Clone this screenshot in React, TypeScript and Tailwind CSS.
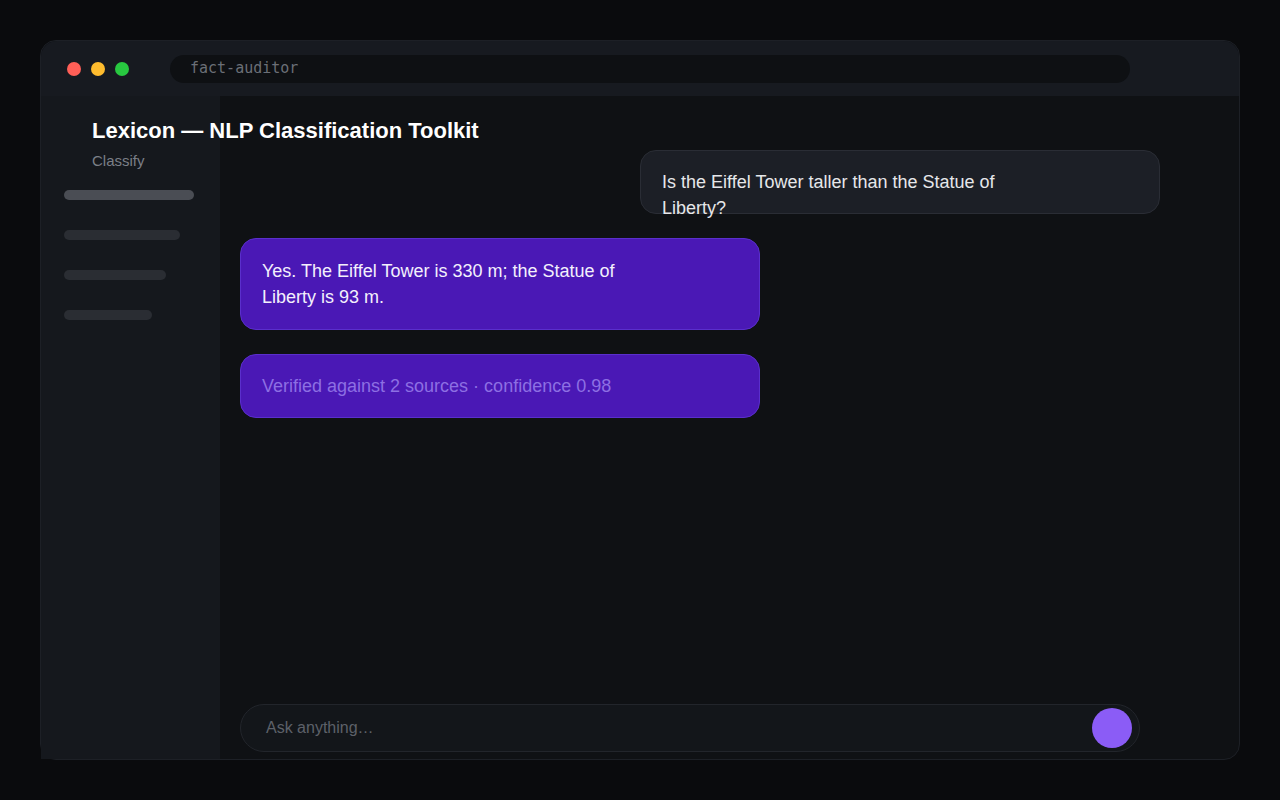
import * as React from "react";

const sans = "font-['Liberation_Sans','Helvetica',Arial,sans-serif]";

function Sidebar() {
  const bars = [
    { w: "w-[130px]", c: "bg-[#4a4d54]" },
    { w: "w-[116px]", c: "bg-[#2a2d33]" },
    { w: "w-[102px]", c: "bg-[#2a2d33]" },
    { w: "w-[88px]", c: "bg-[#2a2d33]" },
  ];
  return (
    <aside className="w-[179px] shrink-0 bg-[#15181d] pl-[23px] pt-[21px]">
      <div className="relative z-10 pl-7 whitespace-nowrap">
        <h1 className="text-[22px] leading-7 font-bold text-white">
          Lexicon — NLP Classification Toolkit
        </h1>
        <p className="mt-[6px] text-[15px] leading-5 text-[#7b7f87]">Classify</p>
      </div>
      <div className="mt-[19px] flex flex-col gap-[30px]">
        {bars.map((b, i) => (
          <div key={i} className={`h-[10px] rounded-full ${b.w} ${b.c}`} />
        ))}
      </div>
    </aside>
  );
}

export default function App() {
  return (
    <div className={`min-h-screen w-full bg-[#0a0b0d] p-10 ${sans}`}>
      <div className="flex h-[720px] w-[1200px] flex-col rounded-2xl border border-[#1d2026] bg-[#0f1114]">
        <div className="flex h-[55px] shrink-0 items-center rounded-t-2xl bg-[#171a20] pl-[26px]">
          <div className="flex gap-[10px]">
            <span className="h-[14px] w-[14px] rounded-full bg-[#ff5f57]" />
            <span className="h-[14px] w-[14px] rounded-full bg-[#febc2e]" />
            <span className="h-[14px] w-[14px] rounded-full bg-[#28c840]" />
          </div>
          <div className="ml-[41px] flex h-7 w-[960px] items-center rounded-full bg-[#0e1013] pl-5 font-['DejaVu_Sans_Mono',monospace] text-[15px] text-[#6b6f77]">
            fact-auditor
          </div>
        </div>
        <div className="flex min-h-0 flex-1">
          <Sidebar />
          <main className="flex flex-1 flex-col px-5 pt-[54px] pb-[7px]">
            <div className="ml-auto mr-[59px] h-16 w-[520px] rounded-2xl border border-[#2a2d35] bg-[#1c1f26] px-[21px] pt-[18px] text-[18px] leading-[26px] text-[#e6e7ea]">
              <p className="max-w-[360px]">Is the Eiffel Tower taller than the Statue of Liberty?</p>
            </div>
            <div className="mt-6 w-[520px] rounded-2xl border border-[#5a2fcc] bg-[#4a18b5] px-[21px] py-[19px] text-[18px] leading-[26px] text-[#f3f0fc]">
              <p className="max-w-[360px]">Yes. The Eiffel Tower is 330 m; the Statue of Liberty is 93 m.</p>
            </div>
            <div className="mt-6 w-[520px] rounded-2xl border border-[#5a2fcc] bg-[#4a18b5] px-[21px] py-[18px] text-[18px] leading-[26px] text-[#8d6fe3]">
              Verified against 2 sources · confidence 0.98
            </div>
            <div className="mt-auto flex h-12 w-[900px] items-center rounded-full border border-[#22252b] bg-[#13161a] pl-[25px] pr-[7px]">
              <span className="flex-1 text-base text-[#5d6169]">Ask anything…</span>
              <button type="button" className="h-10 w-10 rounded-full bg-[#8b5cf6]" aria-label="Send" />
            </div>
          </main>
        </div>
      </div>
    </div>
  );
}
